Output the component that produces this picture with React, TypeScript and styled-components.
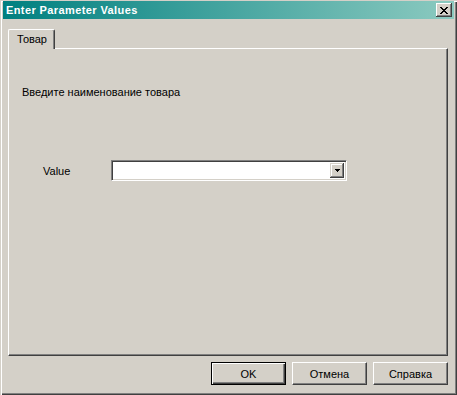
import React from "react";
import styled, { createGlobalStyle } from "styled-components";

const Global = createGlobalStyle`
  html, body { margin: 0; padding: 0; background: #d4d0c8; }
  body {
    font-family: "Liberation Sans", Arial, sans-serif;
    font-size: 11px;
    color: #000;
  }
`;

const Window = styled.div`
  width: 457px;
  height: 395px;
  box-sizing: border-box;
  background: #d4d0c8;
  padding: 1px 3px 3px 3px;
  display: flex;
  flex-direction: column;
  box-shadow: inset 1px 1px #d4d0c8, inset 2px 2px #ffffff,
    inset -1px -1px #404040, inset -2px -2px #808080;
`;

const TitleBar = styled.div`
  height: 18px;
  flex: 0 0 18px;
  display: flex;
  align-items: center;
  justify-content: space-between;
  padding: 0 2px 0 3px;
  background: linear-gradient(to right, #008080, #8ccac0);
  color: #fff;
  font-weight: bold;
  font-size: 11px;
  letter-spacing: 0.4px;
`;

const CaptionButton = styled.div`
  width: 16px;
  height: 14px;
  box-sizing: border-box;
  background: #d4d0c8;
  display: flex;
  align-items: center;
  justify-content: center;
  box-shadow: inset -1px -1px #404040, inset 1px 1px #ffffff,
    inset -2px -2px #808080;
`;

const Body = styled.div`
  flex: 1;
  display: flex;
  flex-direction: column;
  padding: 10px 6px 0 5px;
`;

const TabStrip = styled.div`
  display: flex;
  height: 20px;
  position: relative;
  z-index: 1;
  margin-bottom: -1px;
`;

const Tab = styled.div`
  width: 47px;
  box-sizing: border-box;
  background: #d4d0c8;
  border-top: 1px solid #ffffff;
  border-left: 1px solid #ffffff;
  border-right: 1px solid #404040;
  border-top-left-radius: 2px;
  border-top-right-radius: 2px;
  box-shadow: inset -1px 0 #808080;
  display: flex;
  justify-content: center;
  padding-top: 3px;
  padding-left: 1px;
`;

const Panel = styled.div`
  flex: 0 0 308px;
  box-sizing: border-box;
  border-style: solid;
  border-width: 1px;
  border-color: #ffffff #404040 #404040 #ffffff;
  box-shadow: inset -1px -1px #808080;
  padding: 37px 0 0 13px;
  display: flex;
  flex-direction: column;
`;

const Prompt = styled.div`
  line-height: 13px;
`;

const FieldRow = styled.div`
  display: flex;
  align-items: center;
  margin-top: 61px;
  padding-left: 21px;
`;

const FieldLabel = styled.div`
  width: 68px;
`;

const Combo = styled.div`
  width: 236px;
  height: 21px;
  box-sizing: border-box;
  background: #ffffff;
  border-style: solid;
  border-width: 1px;
  border-color: #808080 #ffffff #ffffff #808080;
  box-shadow: inset 1px 1px #404040, inset -1px -1px #d4d0c8;
  padding: 2px;
  display: flex;
  justify-content: flex-end;
`;

const DropButton = styled.div`
  width: 14px;
  height: 100%;
  box-sizing: border-box;
  background: #d4d0c8;
  box-shadow: inset -1px -1px #404040, inset 1px 1px #d4d0c8,
    inset -2px -2px #808080, inset 2px 2px #ffffff;
  display: flex;
  align-items: center;
  justify-content: center;
`;

const Buttons = styled.div`
  display: flex;
  justify-content: flex-end;
  gap: 6px;
  margin-top: 6px;
`;

const Button = styled.div<{ $default?: boolean }>`
  width: 75px;
  height: 23px;
  box-sizing: border-box;
  display: flex;
  align-items: center;
  justify-content: center;
  background: #d4d0c8;
  ${(p) =>
    p.$default
      ? `border: 1px solid #000000;
         box-shadow: inset 1px 1px #ffffff, inset -1px -1px #404040, inset -2px -2px #808080;`
      : `border-style: solid; border-width: 1px;
         border-color: #ffffff #404040 #404040 #ffffff;
         box-shadow: inset -1px -1px #808080;`}
`;

const CloseGlyph = () => (
  <svg width="8" height="7" viewBox="0 0 8 7" shapeRendering="crispEdges">
    <path
      d="M0 0h2v1H0zM6 0h2v1H6zM1 1h2v1H1zM5 1h2v1H5zM2 2h4v1H2zM3 3h2v1H3zM2 4h4v1H2zM1 5h2v1H1zM5 5h2v1H5zM0 6h2v1H0zM6 6h2v1H6z"
      fill="#000"
    />
  </svg>
);

const Arrow = () => (
  <svg width="5" height="3" viewBox="0 0 5 3" shapeRendering="crispEdges">
    <path d="M0 0h5v1H0zM1 1h3v1H1zM2 2h1v1H2z" fill="#000" />
  </svg>
);

export default function App() {
  return (
    <>
      <Global />
      <Window>
        <TitleBar>
          <span>Enter Parameter Values</span>
          <CaptionButton>
            <CloseGlyph />
          </CaptionButton>
        </TitleBar>
        <Body>
          <TabStrip>
            <Tab>Товар</Tab>
          </TabStrip>
          <Panel>
            <Prompt>Введите наименование товара</Prompt>
            <FieldRow>
              <FieldLabel>Value</FieldLabel>
              <Combo>
                <DropButton>
                  <Arrow />
                </DropButton>
              </Combo>
            </FieldRow>
          </Panel>
          <Buttons>
            <Button $default>OK</Button>
            <Button>Отмена</Button>
            <Button>Справка</Button>
          </Buttons>
        </Body>
      </Window>
    </>
  );
}
